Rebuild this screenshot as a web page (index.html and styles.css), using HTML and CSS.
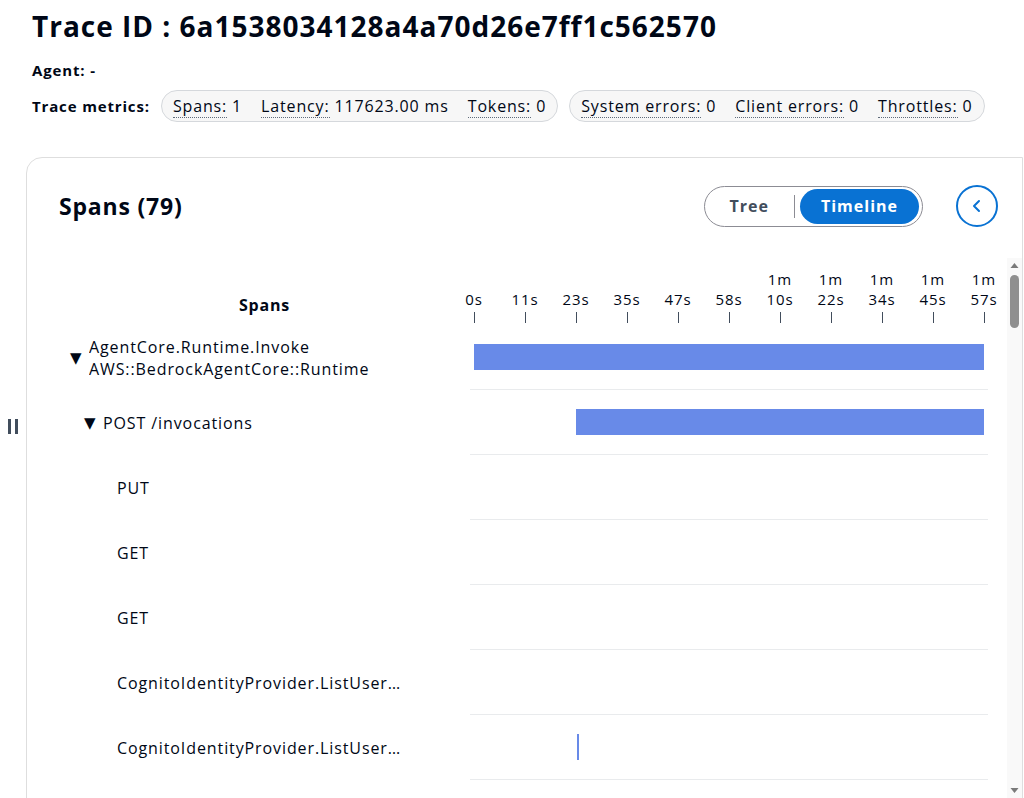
FILE: index.html
```html
<!DOCTYPE html>
<html>
<head>
<link rel="stylesheet" href="styles.css">
</head>
<body>

<div class="page">
  <h1 class="trace-title">Trace ID : 6a1538034128a4a70d26e7ff1c562570</h1>
  <div class="meta-line">
    <span class="meta-label">Agent: -</span>
  </div>
  <div class="meta-line">
    <span class="meta-label">Trace metrics:</span>
    <div class="pill">
      <span class="metric"><span class="metric-name">Spans:</span> 1</span>
      <span class="metric"><span class="metric-name">Latency:</span> 117623.00 ms</span>
      <span class="metric"><span class="metric-name">Tokens:</span> 0</span>
    </div>
    <div class="pill">
      <span class="metric"><span class="metric-name">System errors:</span> 0</span>
      <span class="metric"><span class="metric-name">Client errors:</span> 0</span>
      <span class="metric"><span class="metric-name">Throttles:</span> 0</span>
    </div>
  </div>

  <div class="panel">
    <div class="panel-header">
      <h2 class="panel-title">Spans (79)</h2>
      <div class="panel-actions">
        <div class="segmented">
          <button class="segment">Tree</button>
          <span class="segment-divider"></span>
          <button class="segment segment-active">Timeline</button>
        </div>
        <button class="icon-button" title="Collapse">
          <svg width="16" height="16" viewBox="0 0 16 16"><path d="M10 3 L5 8 L10 13" fill="none" stroke="#0972d3" stroke-width="2" stroke-linecap="round" stroke-linejoin="round"/></svg>
        </button>
      </div>
    </div>

    <div class="span-scroll">
      <div class="grid-head">
        <div class="head-name">Spans</div>
        <div class="head-axis">
          <div class="ticks">
            <div class="tick"><span>0s</span><i></i></div>
            <div class="tick"><span>11s</span><i></i></div>
            <div class="tick"><span>23s</span><i></i></div>
            <div class="tick"><span>35s</span><i></i></div>
            <div class="tick"><span>47s</span><i></i></div>
            <div class="tick"><span>58s</span><i></i></div>
            <div class="tick"><span>1m<br>10s</span><i></i></div>
            <div class="tick"><span>1m<br>22s</span><i></i></div>
            <div class="tick"><span>1m<br>34s</span><i></i></div>
            <div class="tick"><span>1m<br>45s</span><i></i></div>
            <div class="tick"><span>1m<br>57s</span><i></i></div>
          </div>
        </div>
      </div>
      <div id="span-rows"></div>
    </div>

    <div class="scroll-rail">
      <svg class="rail-arrow" width="15" height="15" viewBox="0 0 15 15"><path d="M3.5 10 L7.5 5 L11.5 10 Z" fill="#7a7a7a"/></svg>
      <div class="rail-thumb"></div>
      <svg class="rail-arrow rail-arrow-down" width="15" height="15" viewBox="0 0 15 15"><path d="M3.5 5 L7.5 10 L11.5 5 Z" fill="#7a7a7a"/></svg>
    </div>
  </div>
</div>

<div class="split-handle"><i></i><i></i></div>

<script>
  var TOTAL_MS = 117623;
  var AXIS_PX = 510;
  var ROW_HEIGHT = 65;
  var SPAN_COUNT = 79;

  // only the rows in view are rendered, the rest is a spacer
  var spans = [
    { name: "AgentCore.Runtime.Invoke", resource: "AWS::BedrockAgentCore::Runtime", depth: 0, parent: true, start: 0, duration: 117623 },
    { name: "POST /invocations", depth: 1, parent: true, start: 23524, duration: 94099 },
    { name: "PUT", depth: 2, start: 23600, duration: 0 },
    { name: "GET", depth: 2, start: 23620, duration: 0 },
    { name: "GET", depth: 2, start: 23640, duration: 0 },
    { name: "CognitoIdentityProvider.ListUsersInGroup", depth: 2, start: 23700, duration: 0 },
    { name: "CognitoIdentityProvider.ListUsersInGroup", depth: 2, start: 23760, duration: 400 }
  ];

  function render() {
    var box = document.getElementById("span-rows");
    var html = "";
    for (var i = 0; i < spans.length; i++) {
      var s = spans[i];
      var pad = 11 + s.depth * 14;
      html += '<div class="span-row">';
      html += '<div class="span-name" style="padding-left:' + pad + 'px">';
      html += '<span class="toggle">' + (s.parent ? '&#9660;' : '') + '</span>';
      html += '<span class="label">' + s.name;
      if (s.resource) html += '<br>' + s.resource;
      html += '</span></div>';
      html += '<div class="span-track"><div class="track">';
      if (s.duration > 0) {
        var left = s.start / TOTAL_MS * AXIS_PX;
        var width = Math.max(s.duration / TOTAL_MS * AXIS_PX, 1);
        html += '<div class="bar" style="left:' + left.toFixed(1) + 'px;width:' + width.toFixed(1) + 'px"></div>';
      }
      html += '</div></div></div>';
    }
    html += '<div style="height:' + (SPAN_COUNT - spans.length) * ROW_HEIGHT + 'px"></div>';
    box.innerHTML = html;
  }
  render();
</script>

</body>
</html>
```

FILE: styles.css
```css
html, body {
  margin: 0;
  overflow: hidden;
}

body {
  font-family: "Open Sans", "Noto Sans", sans-serif;
  color: #000716;
  background: #ffffff;
}

.page {
  padding: 8px 0 0 26px;
}

.trace-title {
  margin: 0 0 0 6px;
  font-size: 28px;
  line-height: 36px;
  font-weight: 700;
  letter-spacing: 1px;
}

.meta-line {
  display: flex;
  align-items: center;
  gap: 11px;
  margin: 16px 0 0 6px;
  font-size: 16px;
  letter-spacing: 0.85px;
}

.meta-line + .meta-line {
  margin-top: 10px;
}

.meta-label {
  font-size: 15px;
  font-weight: 700;
  line-height: 20px;
  letter-spacing: 0.85px;
}

.pill {
  display: flex;
  gap: 19px;
  height: 30px;
  align-items: center;
  padding: 0 11px;
  border: 1px solid #d5d8dc;
  border-radius: 16px;
  background: #f7f7f7;
}

.metric-name {
  border-bottom: 1px dotted #5f6b7a;
}

.panel {
  position: relative;
  margin-top: 35px;
  margin-right: 1px;
  border: 1px solid #dedede;
  border-radius: 16px 0 0 0;
  height: 800px;
}

.panel-header {
  display: flex;
  align-items: center;
  justify-content: space-between;
  padding: 27px 24px 0 32px;
}

.panel-title {
  margin: 0;
  font-size: 23px;
  font-weight: 700;
  letter-spacing: 0.8px;
}

.panel-actions {
  display: flex;
  align-items: center;
  gap: 33px;
}

.segmented {
  display: flex;
  align-items: center;
  height: 39px;
  padding: 0 3px 0 0;
  border: 1px solid #8c8c94;
  border-radius: 21px;
}

.segment {
  border: none;
  background: none;
  font-family: inherit;
  font-size: 16px;
  font-weight: 700;
  letter-spacing: 1px;
  color: #414d5c;
  padding: 0 25px;
  height: 35px;
  border-radius: 18px;
  cursor: pointer;
}

.segment-divider {
  width: 1px;
  height: 23px;
  background: #8c8c94;
  margin: 0 5px 0 0;
}

.segment-active {
  background: #0972d3;
  color: #ffffff;
  padding: 0 21px;
}

.icon-button {
  width: 42px;
  height: 42px;
  border: 2px solid #0972d3;
  border-radius: 50%;
  background: #ffffff;
  display: flex;
  align-items: center;
  justify-content: center;
  padding: 0;
  cursor: pointer;
}

.span-scroll {
  margin: 32px 15px 0 32px;
  height: 540px;
  overflow-y: auto;
}

.scroll-rail {
  position: absolute;
  top: 100px;
  right: 0;
  width: 15px;
  height: 540px;
  background: #f9f9f9;
  display: flex;
  flex-direction: column;
}

.rail-arrow {
  display: block;
  flex: none;
}

.rail-arrow-down {
  margin-top: auto;
}

.rail-thumb {
  width: 9px;
  height: 53px;
  margin: 2px 0 0 3px;
  border-radius: 5px;
  background: #8f8f8f;
}

.grid-head,
.span-row {
  display: grid;
  grid-template-columns: 411px 518px;
}

.grid-head {
  position: sticky;
  top: 0;
  height: 66px;
  background: #ffffff;
  z-index: 1;
}

.head-name {
  align-self: end;
  text-align: center;
  font-size: 16px;
  font-weight: 700;
  line-height: 22px;
  letter-spacing: 0.8px;
  padding-bottom: 9px;
}

.head-axis {
  padding: 10px 4px 0;
}

.ticks {
  display: flex;
  justify-content: space-between;
  width: 550px;
  margin-left: -20px;
}

.tick {
  width: 40px;
  height: 54px;
  display: flex;
  flex-direction: column;
  justify-content: flex-end;
  align-items: center;
  font-size: 15px;
  line-height: 20px;
  letter-spacing: 0.9px;
  text-align: center;
}

.tick i {
  display: block;
  width: 1px;
  height: 11px;
  margin-top: 3px;
  background: #414d5c;
}

.span-row {
  height: 65px;
}

.span-name {
  display: flex;
  align-items: center;
  padding-right: 67px;
  font-size: 16px;
  line-height: 22px;
  letter-spacing: 0.9px;
  min-width: 0;
}

.toggle {
  flex: none;
  width: 19px;
  font-family: "DejaVu Sans", sans-serif;
  font-size: 15px;
  letter-spacing: 0;
}

.label {
  white-space: nowrap;
  overflow: hidden;
  text-overflow: ellipsis;
}

.span-track {
  padding: 0 4px;
  border-bottom: 1px solid #e9ebed;
  display: flex;
  align-items: center;
}

.track {
  position: relative;
  width: 510px;
  height: 26px;
}

.bar {
  position: absolute;
  top: 0;
  height: 26px;
  background: #688ae8;
}

.split-handle {
  position: absolute;
  left: 8px;
  top: 419px;
  display: flex;
  gap: 4px;
}

.split-handle i {
  display: block;
  width: 3px;
  height: 15px;
  background: #414d5c;
}
```
